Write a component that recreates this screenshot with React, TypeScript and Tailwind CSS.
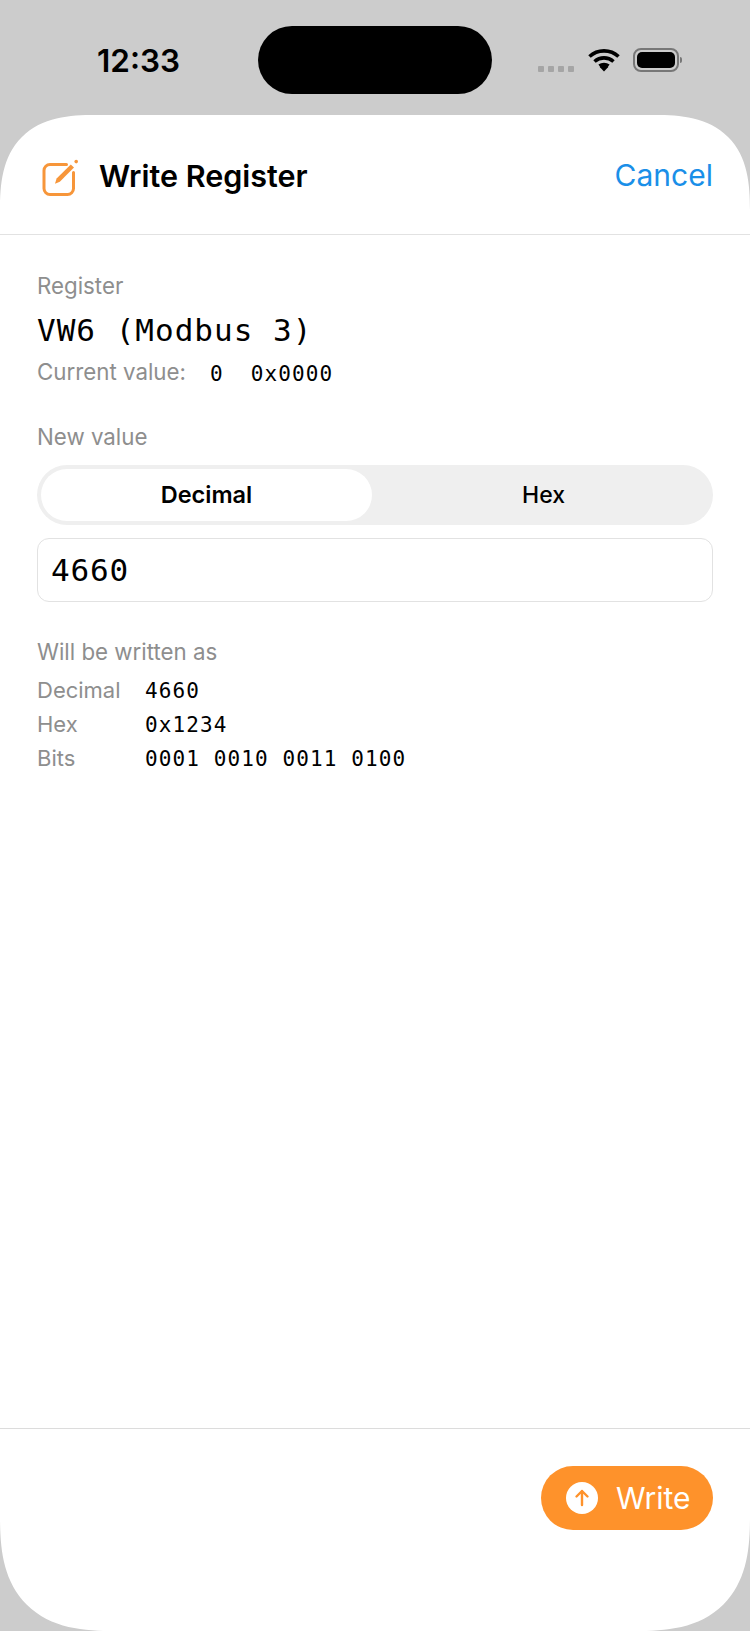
const sans = "font-['Inter','Liberation_Sans',sans-serif]";
const mono = "font-['DejaVu_Sans_Mono',monospace]";

function PencilBox() {
  return (
    <svg width="38" height="38" viewBox="0 0 38 38" fill="none" className="mt-[4px]">
      <path d="M25.5 5.5H9A6 6 0 0 0 3 11.5V29.5a6 6 0 0 0 6 6H26.5a6 6 0 0 0 6-6V13.5" stroke="#f7963a" strokeWidth="3" strokeLinecap="round" />
      <path d="M14 24.8 15.6 19.6 29.8 5.4 33 8.6 18.8 22.8z" fill="#f7963a" />
      <circle cx="35.2" cy="2.6" r="1.8" fill="#f7963a" />
    </svg>
  );
}

function Wifi() {
  return (
    <svg width="32" height="24" viewBox="0 0 32 24" fill="none" stroke="#000" strokeWidth="3.6">
      <path d="M1.5 8.5C9.5 1 22.5 1 30.5 8.5" />
      <path d="M6.5 13.5c5.5-4.8 13.5-4.8 19 0" />
      <path d="M11.5 18c2.6-2 6.4-2 9 0" />
      <path d="M16 23.5 11.7 19c2.6-2 6-2 8.6 0z" fill="#000" stroke="none" />
    </svg>
  );
}

function Battery() {
  return (
    <div className="flex items-center">
      <div className="flex h-[24px] w-[46px] items-center justify-center rounded-[8px] border-2 border-[#777]">
        <div className="h-[16px] w-[38px] rounded-[5px] bg-black" />
      </div>
      <div className="ml-[1px] h-[6px] w-[2px] rounded-r-full bg-[#777]" />
    </div>
  );
}

function StatusBar() {
  return (
    <div className="relative flex h-[115px] items-center">
      <div className="ml-[97px] mt-[6px] text-[31.5px] font-semibold leading-none text-black">12:33</div>
      <div className="absolute left-[258px] top-[26px] h-[68px] w-[234px] rounded-full bg-black" />
      <div className="absolute left-[538px] top-[48px] flex items-center">
        <div className="mt-[17px] flex gap-[4px]">
          <span className="h-[6px] w-[6px] rounded-[1px] bg-[#a5a5a5]" />
          <span className="h-[6px] w-[6px] rounded-[1px] bg-[#a5a5a5]" />
          <span className="h-[6px] w-[6px] rounded-[1px] bg-[#a5a5a5]" />
          <span className="h-[6px] w-[6px] rounded-[1px] bg-[#a5a5a5]" />
        </div>
        <div className="ml-[14px]">
          <Wifi />
        </div>
        <div className="ml-[13px]">
          <Battery />
        </div>
      </div>
    </div>
  );
}

function Row({ label, value }: { label: string; value: string }) {
  return (
    <div className="flex h-[34px] items-center">
      <span className="w-[108px] text-[22px] text-[#8e8e8e]">{label}</span>
      <span className={`${mono} pt-[4px] text-[21px] tracking-[1.1px] text-black`}>{value}</span>
    </div>
  );
}

export default function App() {
  return (
    <div className={`flex h-[1631px] w-[750px] flex-col overflow-hidden bg-[#cccccc] ${sans}`}>
      <StatusBar />
      <div className="flex flex-1 flex-col rounded-t-[95px] rounded-b-[115px] bg-white [corner-shape:superellipse(1.4)]">
        {/* header */}
        <div className="flex h-[120px] items-center justify-between border-b border-[#e2e2e2] pl-[41px] pr-[37px] pt-[2px]">
          <div className="flex items-center gap-[20px]">
            <PencilBox />
            <span className="text-[30.5px] font-semibold text-black">Write Register</span>
          </div>
          <span className="text-[30px] text-[#1a8fe8]">Cancel</span>
        </div>

        {/* form */}
        <div className="flex flex-1 flex-col px-[37px] pt-[34px]">
          <div className="text-[22.3px] leading-[34px] text-[#8e8e8e]">Register</div>
          <div className={`mt-[5px] ${mono} text-[31px] leading-[44px] tracking-[1px] text-black`}>
            VW6 (Modbus 3)
          </div>
          <div className="mt-[3px] flex h-[34px] items-center">
            <span className="text-[22.3px] text-[#8e8e8e]">Current value:</span>
            <span className={`ml-[24px] ${mono} pt-[6px] text-[21px] tracking-[1.1px] text-black`}>0</span>
            <span className={`ml-[27px] ${mono} pt-[6px] text-[21px] tracking-[1.1px] text-black`}>0x0000</span>
          </div>

          <div className="mt-[31px] text-[22.3px] leading-[34px] text-[#8e8e8e]">New value</div>
          <div className="mt-[11px] flex h-[60px] rounded-full bg-[#efefef] p-[4px]">
            <div className="flex w-[331px] items-center justify-center rounded-full bg-white text-[23.5px] font-semibold text-black">
              Decimal
            </div>
            <div className="flex flex-1 items-center justify-center pl-[6px] text-[23px] font-medium text-black">Hex</div>
          </div>
          <div className={`mt-[13px] flex h-[64px] items-center rounded-[12px] border border-[#e2e2e2] px-[13px] ${mono} text-[31px] tracking-[0.8px] text-black`}>
            4660
          </div>

          <div className="mt-[33px] text-[22.3px] leading-[34px] text-[#8e8e8e]">Will be written as</div>
          <div className="mt-[4px]">
            <Row label="Decimal" value="4660" />
            <Row label="Hex" value="0x1234" />
            <Row label="Bits" value="0001 0010 0011 0100" />
          </div>
        </div>

        {/* footer */}
        <div className="flex h-[203px] justify-end border-t border-[#dcdcdc] pr-[37px] pt-[37px]">
          <button className="flex h-[64px] w-[172px] items-center gap-[18px] rounded-full bg-[#fe922b] pl-[25px] text-[30px] text-white">
            <span className="flex h-[32px] w-[32px] items-center justify-center rounded-full bg-white">
              <svg width="16" height="18" viewBox="0 0 16 18" fill="none" stroke="#fe922b" strokeWidth="2.4" strokeLinecap="round" strokeLinejoin="round">
                <path d="M8 16V2M2.5 7.5 8 2l5.5 5.5" />
              </svg>
            </span>
            Write
          </button>
        </div>
      </div>
    </div>
  );
}
